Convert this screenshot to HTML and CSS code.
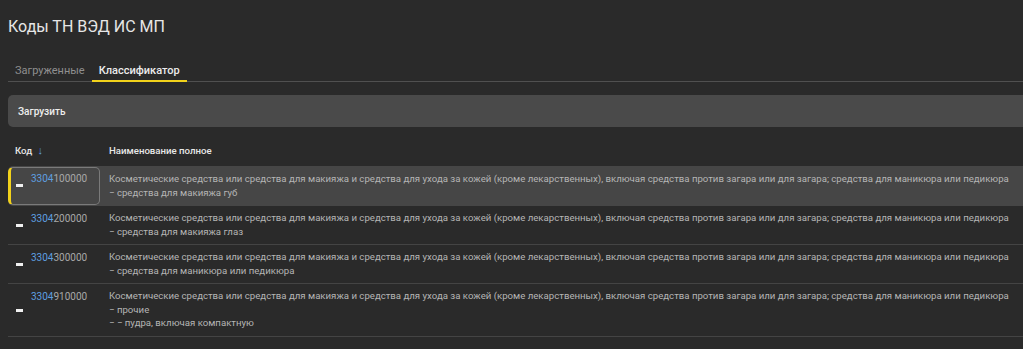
FILE: index.html
```html
<!DOCTYPE html>
<html lang="ru">
	<head>
		<meta charset="UTF-8" />
		<title>Коды ТН ВЭД ИС МП</title>
		<link rel="stylesheet" href="styles.css">
	</head>
	<body>
		<div class="page">
			<h1 class="title">Коды ТН ВЭД ИС МП</h1>

			<div class="tabs">
				<div class="tab">Загруженные</div>
				<div class="tab active">Классификатор</div>
			</div>

			<div class="toolbar">
				<span class="toolbar-btn">Загрузить</span>
			</div>

			<div class="table">
				<div class="thead">
					<div class="col-code">Код <span class="sort">&#8595;</span></div>
					<div class="col-name">Наименование полное</div>
				</div>

				<div class="row selected">
					<div class="col-code cell-code">
						<span class="minus"></span>
						<span class="code"><b>3304</b>100000</span>
					</div>
					<div class="col-name cell-name">
						<div>Косметические средства или средства для макияжа и средства для ухода за кожей (кроме лекарственных), включая средства против загара или для загара; средства для маникюра или педикюра</div>
						<div>&minus; средства для макияжа губ</div>
					</div>
				</div>

				<div class="row">
					<div class="col-code cell-code">
						<span class="minus"></span>
						<span class="code"><b>3304</b>200000</span>
					</div>
					<div class="col-name cell-name">
						<div>Косметические средства или средства для макияжа и средства для ухода за кожей (кроме лекарственных), включая средства против загара или для загара; средства для маникюра или педикюра</div>
						<div>&minus; средства для макияжа глаз</div>
					</div>
				</div>

				<div class="row">
					<div class="col-code cell-code">
						<span class="minus"></span>
						<span class="code"><b>3304</b>300000</span>
					</div>
					<div class="col-name cell-name">
						<div>Косметические средства или средства для макияжа и средства для ухода за кожей (кроме лекарственных), включая средства против загара или для загара; средства для маникюра или педикюра</div>
						<div>&minus; средства для маникюра или педикюра</div>
					</div>
				</div>

				<div class="row">
					<div class="col-code cell-code">
						<span class="minus"></span>
						<span class="code"><b>3304</b>910000</span>
					</div>
					<div class="col-name cell-name">
						<div>Косметические средства или средства для макияжа и средства для ухода за кожей (кроме лекарственных), включая средства против загара или для загара; средства для маникюра или педикюра</div>
						<div>&minus; прочие</div>
						<div>&minus; &minus; пудра, включая компактную</div>
					</div>
				</div>
			</div>
		</div>
	</body>
</html>
```

FILE: styles.css
```css
:root {
	--bg: #2a2a2a;
	--panel: #4a4a4a;
	--row-active: #464646;
	--line: #444;
	--text: #e2e2e2;
	--muted: #b5b5b5;
	--blue: #5e9fe0;
	--yellow: #f2d21b;
}

html,
body {
	margin: 0;
	overflow: hidden;
}

body {
	background: var(--bg);
	color: var(--text);
	font-family: Roboto, "Noto Sans", sans-serif;
}

.page {
	width: 1060px;
	padding: 0 0 0 8px;
}

.title {
	margin: 0;
	padding-top: 16px;
	font-size: 16px;
	font-weight: 400;
	line-height: 22px;
	color: #e6e6e6;
}

/* tabs */
.tabs {
	display: flex;
	margin-top: 24px;
	border-bottom: 1px solid #505050;
	font-size: 11px;
}

.tab {
	padding: 2px 7px 2px;
	line-height: 14px;
	color: #8f8f8f;
	border-bottom: 2px solid transparent;
	margin-bottom: -1px;
}

.tab.active {
	color: #ececec;
	font-weight: 500;
	border-bottom-color: var(--yellow);
}

/* toolbar */
.toolbar {
	margin-top: 13px;
	height: 32px;
	display: flex;
	align-items: center;
	padding-left: 10px;
	background: var(--panel);
	border-radius: 5px;
}

.toolbar-btn {
	font-size: 10px;
	font-weight: 500;
	color: #eee;
}

/* table */
.table {
	margin-top: 14px;
	font-size: 9.65px;
}

.thead {
	display: flex;
	height: 19px;
	align-items: center;
	font-weight: 500;
	color: #e8e8e8;
	margin-bottom: 6px;
}

.col-code {
	width: 101px;
	flex: none;
	padding-left: 7px;
	box-sizing: border-box;
}

.col-name {
	flex: 1;
}

.sort {
	color: var(--blue);
	margin-left: 3px;
	font-size: 11px;
	font-weight: 700;
}

.row {
	display: flex;
	border-bottom: 1px solid var(--line);
	min-height: 39px;
	box-sizing: border-box;
}

.row.selected {
	background: var(--row-active);
	border-bottom: 0;
	border-radius: 5px 0 0 5px;
	padding: 1px 0;
}

.cell-code {
	display: flex;
	align-items: flex-start;
	padding-top: 6px;
	padding-left: 8px;
}

.selected .cell-code {
	border: 1px solid #7a7a7a;
	border-left: 3px solid var(--yellow);
	border-radius: 5px;
	width: 92px;
	margin-right: 9px;
	padding-top: 4px;
	padding-left: 5px;
}

.minus {
	width: 7px;
	height: 3px;
	background: #f0f0f0;
	margin-top: 12px;
	margin-right: 8px;
	flex: none;
}

.row:last-child .minus {
	margin-top: 19px;
}

.code {
	color: #a8a8a8;
	font-size: 10px;
	line-height: 13px;
}

.code b {
	color: var(--blue);
	font-weight: 400;
}

.cell-name {
	color: var(--muted);
	line-height: 13.5px;
	padding: 5px 0 6px;
	white-space: nowrap;
}
```
